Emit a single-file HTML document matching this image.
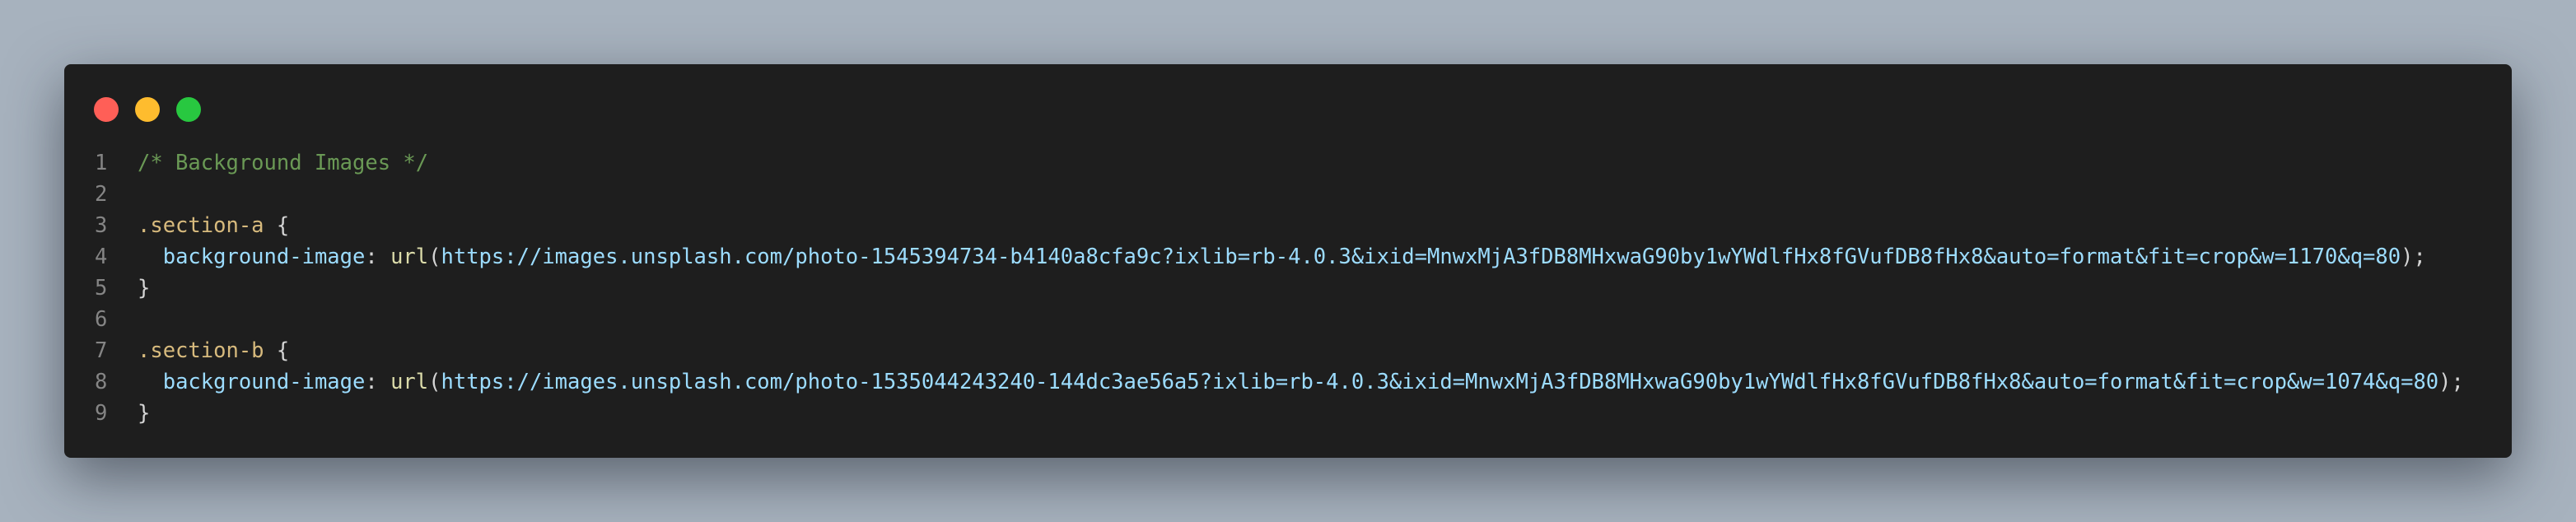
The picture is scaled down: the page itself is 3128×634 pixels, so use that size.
<!DOCTYPE html>
<html><head><meta charset="utf-8"><style>
html,body{margin:0;padding:0;width:3128px;height:634px;overflow:hidden;background:#a7b2be;}
.win{position:absolute;left:78px;top:78px;width:2972px;height:478px;background:#1e1e1e;border-radius:8px;box-shadow:0 24px 70px rgba(30,35,45,0.55);}
.dot{position:absolute;top:40px;width:30px;height:30px;border-radius:50%;}
.code{position:absolute;left:0;top:101px;font-family:"DejaVu Sans Mono","Liberation Mono",monospace;font-size:25.5px;line-height:38px;white-space:pre;color:#d4d4d4;}
.ln{display:inline-block;width:89px;color:#858585;box-sizing:border-box;padding-left:37px;text-align:left;}
.c{color:#6a9955}.s{color:#d7ba7d}.p{color:#9cdcfe}.f{color:#dcdcaa}
</style></head><body>
<div class="win">
<div class="dot" style="left:36px;background:#ff5f57"></div>
<div class="dot" style="left:86px;background:#febc2e"></div>
<div class="dot" style="left:136px;background:#28c840"></div>
<div class="code"><span class="ln">1</span><span class="c">/* Background Images */</span>
<span class="ln">2</span>
<span class="ln">3</span><span class="s">.section-a</span> {
<span class="ln">4</span>  <span class="p">background-image</span>: <span class="f">url</span>(<span class="p">https://images.unsplash.com/photo-1545394734-b4140a8cfa9c?ixlib=rb-4.0.3&amp;ixid=MnwxMjA3fDB8MHxwaG90by1wYWdlfHx8fGVufDB8fHx8&amp;auto=format&amp;fit=crop&amp;w=1170&amp;q=80</span>);
<span class="ln">5</span>}
<span class="ln">6</span>
<span class="ln">7</span><span class="s">.section-b</span> {
<span class="ln">8</span>  <span class="p">background-image</span>: <span class="f">url</span>(<span class="p">https://images.unsplash.com/photo-1535044243240-144dc3ae56a5?ixlib=rb-4.0.3&amp;ixid=MnwxMjA3fDB8MHxwaG90by1wYWdlfHx8fGVufDB8fHx8&amp;auto=format&amp;fit=crop&amp;w=1074&amp;q=80</span>);
<span class="ln">9</span>}</div>
</div>
</body></html>
